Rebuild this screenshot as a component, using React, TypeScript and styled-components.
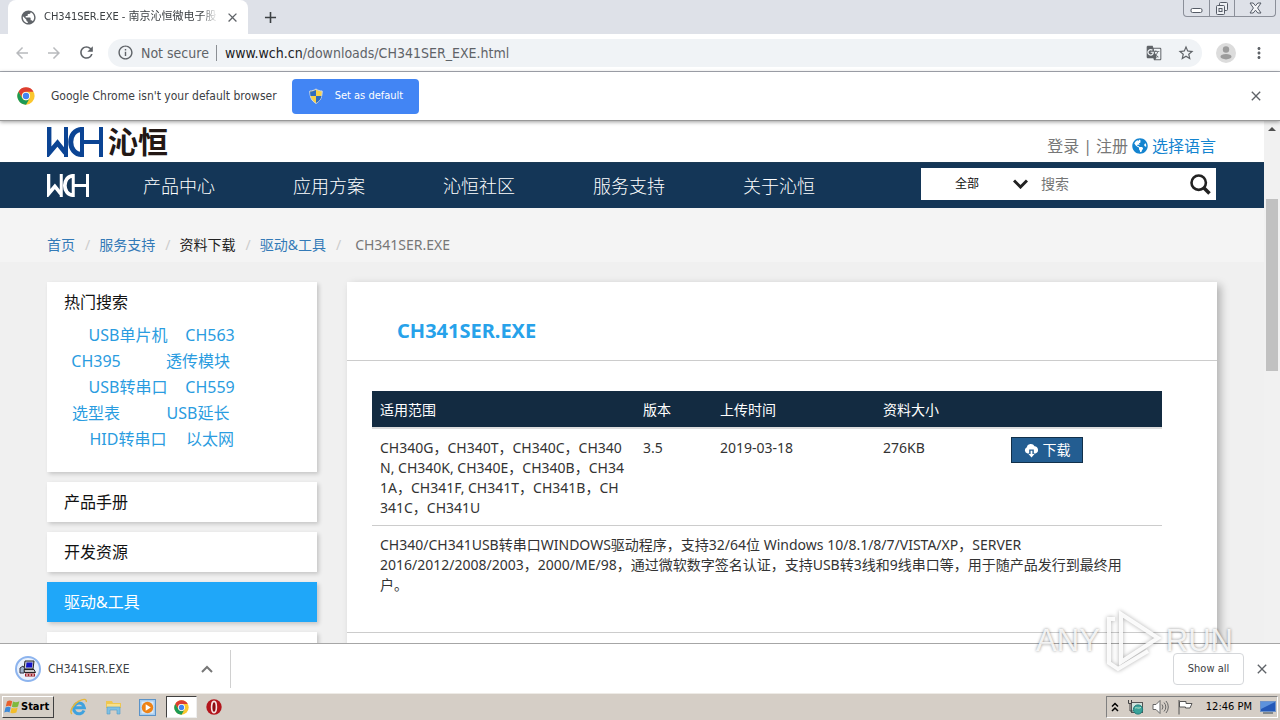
import React from "react";
import styled, { createGlobalStyle } from "styled-components";
import {
  MdAdd,
  MdArrowBack,
  MdArrowForward,
  MdClose,
  MdGTranslate,
  MdInfoOutline,
  MdMoreVert,
  MdPublic,
  MdRefresh,
  MdStarBorder,
} from "react-icons/md";
import { FaGlobeAmericas } from "react-icons/fa";

const ui = `"DejaVu Sans Condensed", "Noto Sans", "Noto Sans CJK SC", sans-serif`;
const web = `"Noto Sans", "Noto Sans CJK SC", sans-serif`;

const GlobalStyle = createGlobalStyle`
  *, *::before, *::after { box-sizing: border-box; }
  body { margin: 0; font-family: ${web}; color: #333; background: #fff; }
  button, input, select { font: inherit; color: inherit; margin: 0; padding: 0; border: 0; background: none; border-radius: 0; outline: none; }
  button { cursor: pointer; }
  a { text-decoration: none; }
  svg { display: block; flex: none; }
  ul, ol { list-style: none; margin: 0; padding: 0; }
`;

const Screen = styled.div`
  height: 100vh;
  display: flex;
  flex-direction: column;
  overflow: hidden;
`;

/* ---------- browser frame ---------- */

const TabStrip = styled.div`
  flex: none;
  height: 34px;
  background: #dee1e8;
  display: flex;
  padding-left: 8px;
`;

const Tab = styled.div`
  width: 240px;
  background: #fff;
  border-radius: 8px 8px 0 0;
  display: flex;
  align-items: center;
  padding: 0 8px 0 12px;
  gap: 7px;
  color: #5f6368;
`;

const TabTitle = styled.span`
  flex: 1;
  min-width: 0;
  overflow: hidden;
  white-space: nowrap;
  font: 11px/16px ${ui};
  color: #3c4043;
  mask-image: linear-gradient(to right, #000 90%, transparent);
`;

const IconButton = styled.button<{ $tone?: string }>`
  display: flex;
  align-items: center;
  justify-content: center;
  color: ${(p) => p.$tone || "#5f6368"};
`;

const NewTab = styled(IconButton)`
  width: 44px;
`;

const WindowButtons = styled.div`
  margin: 0 4px 0 auto;
  height: 17px;
  display: flex;
  border: 1px solid #8b8f99;
  border-top: 0;
  border-radius: 0 0 4px 4px;
`;

const WindowButton = styled.button<{ $wide?: boolean }>`
  width: ${(p) => (p.$wide ? 41 : 25)}px;
  display: flex;
  align-items: center;
  justify-content: center;
  &:not(:first-child) { border-left: 1px solid #8b8f99; }
`;

const Toolbar = styled.div`
  flex: none;
  height: 38px;
  background: #fff;
  border-bottom: 1px solid #a9adb5;
  display: flex;
  align-items: center;
  padding: 0 12px 0 13px;
  gap: 14px;
`;

const AddressBar = styled.div`
  flex: 1;
  height: 28px;
  margin-left: -2px;
  border-radius: 14px;
  background: #f0f3f6;
  display: flex;
  align-items: center;
  padding: 0 7px 0 9px;
  font: 14px/20px ${ui};
  color: #5f6368;
`;

const Security = styled.span`
  margin-left: 7px;
  padding-right: 7px;
  border-right: 1px solid #8b8f94;
  line-height: 16px;
`;

const Url = styled.span`
  flex: 1;
  margin-left: 8px;
  b { font-weight: 400; color: #202124; }
`;

const AddressIcons = styled.span`
  display: flex;
  align-items: center;
  gap: 15px;
`;

const InfoBar = styled.div`
  flex: none;
  height: 49px;
  background: #fff;
  display: flex;
  align-items: center;
  padding: 0 16px 0 17px;
  font: 12px/16px ${ui};
  color: #3c4043;
  border-bottom: 1px solid #989898;
  box-shadow: 0 1px 4px rgba(0, 0, 0, 0.4);
  position: relative;
`;

const InfoText = styled.span`
  margin: 0 15px 0 16px;
`;

const DefaultButton = styled.button`
  height: 35px;
  padding: 0 16px;
  border-radius: 4px;
  background: #4285f4;
  color: #fff;
  font-size: 11px;
  display: flex;
  align-items: center;
  gap: 11px;
`;

const PushRight = styled.span`
  margin-left: auto;
`;

/* ---------- web page ---------- */

const Viewport = styled.div`
  flex: 1;
  min-height: 0;
  display: flex;
  overflow: hidden;
`;

const Page = styled.div`
  flex: 1;
  min-width: 0;
  overflow: hidden;
  background: #f0f0f0;
`;

const Scrollbar = styled.div`
  flex: none;
  width: 16px;
  background: #f1f1f1;
  display: flex;
  flex-direction: column;
  align-items: center;
  padding-top: 5px;
`;

const Thumb = styled.div`
  width: 12px;
  height: 172px;
  margin-top: 68px;
  background: #c1c1c1;
`;

const Container = styled.div`
  max-width: 1170px;
  margin: 0 auto;
  display: flex;
`;

const TopBand = styled.header`
  background: #fff;
  ${Container} {
    height: 41px;
    align-items: center;
    justify-content: space-between;
  }
`;

const Brand = styled.a`
  display: flex;
  align-items: center;
  gap: 5px;
  color: #231815;
  font-size: 30px;
  line-height: 36px;
  font-weight: 700;
`;

const Account = styled.div`
  display: flex;
  align-items: center;
  gap: 4px;
  padding: 8px 1px 0 0;
  font-size: 16px;
  line-height: 24px;
  color: #777;
  a { color: #777; }
`;

const LanguageLink = styled.a`
  && { color: #1484d0; }
  display: flex;
  align-items: center;
  gap: 4px;
`;

const NavBand = styled.nav`
  background: #143657;
  border-top: 1px solid #1b3a55;
  ${Container} {
    height: 45px;
    align-items: center;
  }
`;

const NavList = styled.ul`
  display: flex;
  margin-left: 15px;
`;

const NavItem = styled.li`
  width: 150px;
  text-align: center;
  a { color: #fff; font-size: 18px; line-height: 24px; font-weight: 300; }
`;

const SearchBox = styled.form`
  margin: 0 1px 3px auto;
  width: 295px;
  height: 32px;
  background: #fff;
  display: flex;
  align-items: center;
  padding-right: 5px;
  svg { color: #222; }
`;

const Scope = styled.select`
  appearance: none;
  width: 92px;
  padding-left: 34px;
  font-size: 12px;
  line-height: 20px;
  color: #111;
`;

const Query = styled.input`
  flex: 1;
  min-width: 0;
  margin-left: 13px;
  font-size: 14px;
  line-height: 20px;
  &::placeholder { color: #757575; opacity: 1; }
`;

const CrumbBand = styled.div`
  background: #f4f4f4;
  ${Container} {
    height: 54px;
    padding-top: 20px;
    align-items: center;
  }
`;

const Crumbs = styled.ol`
  display: flex;
  font-size: 14px;
  line-height: 20px;
`;

const Crumb = styled.li<{ $current?: boolean }>`
  color: ${(p) => (p.$current ? "#777" : "#222")};
  a { color: #337ab7; }
  &:not(:first-child)::before {
    content: "/";
    color: #ccc;
    padding: 0 ${(p) => (p.$current ? 14 : 9)}px 0 10px;
  }
`;

const Body = styled(Container)`
  padding-top: 20px;
  gap: 30px;
  align-items: flex-start;
`;

const Sidebar = styled.aside`
  flex: none;
  width: 270px;
  display: flex;
  flex-direction: column;
  gap: 10px;
`;

const HotCard = styled.section`
  height: 190px;
  background: #fff;
  box-shadow: 2px 2px 4px rgba(0, 0, 0, 0.18);
  padding: 8px 17px;
`;

const HotTitle = styled.h2`
  margin: 0 0 7px;
  font-size: 16px;
  line-height: 25px;
  font-weight: 400;
  color: #111;
`;

const HotRow = styled.div<{ $wideFirst: boolean }>`
  display: grid;
  grid-template-columns: ${(p) => (p.$wideFirst ? "96px 64px" : "64px 96px")};
  column-gap: ${(p) => (p.$wideFirst ? 2 : 22)}px;
  padding-left: ${(p) => (p.$wideFirst ? 16 : 0)}px;
  text-align: center;
  a { color: #2a9ce0; font-size: 16px; line-height: 26px; white-space: nowrap; }
`;

const SideLink = styled.a<{ $active?: boolean }>`
  height: 40px;
  padding: 0 17px;
  font-size: 16px;
  line-height: 40px;
  color: ${(p) => (p.$active ? "#fff" : "#111")};
  background: ${(p) => (p.$active ? "#1fa7f9" : "#fff")};
  box-shadow: 2px 2px 4px rgba(0, 0, 0, 0.18);
`;

const Main = styled.main`
  flex: 1;
  min-width: 0;
  height: 480px;
  background: #fff;
  box-shadow: 4px 3px 8px rgba(0, 0, 0, 0.25);
`;

const Title = styled.h1`
  margin: 0;
  padding: 20px 50px 0;
  height: 79px;
  border-bottom: 1px solid #ccc;
  display: flex;
  align-items: center;
  font-size: 20px;
  line-height: 26px;
  font-weight: 700;
  color: #27a2ea;
`;

const Section = styled.div`
  height: 272px;
  padding: 30px 55px 0 25px;
  border-bottom: 1px solid #ccc;
`;

const Files = styled.table`
  width: 100%;
  table-layout: fixed;
  border-collapse: collapse;
  font-size: 14px;
  line-height: 20px;
  th, td { text-align: left; vertical-align: top; padding: 9px 8px 7px; font-weight: 400; }
  thead tr { background: #132b41; color: #fff; border-bottom: 2px solid #ddd; }
  tbody tr + tr { border-top: 1px solid #ccc; }
  td.action { padding-top: 8px; }
`;

const DownloadLink = styled.a`
  display: inline-flex;
  align-items: center;
  justify-content: center;
  gap: 4px;
  width: 72px;
  height: 26px;
  background: #235d91;
  border: 1px solid #12304a;
  color: #fff;
`;

const Line = styled.span`
  display: block;
  white-space: nowrap;
`;

/* ---------- download shelf and taskbar ---------- */

const Shelf = styled.div`
  flex: none;
  height: 50px;
  background: #fff;
  border-top: 1px solid #a6a6a6;
  display: flex;
  align-items: center;
  padding: 0 10px 0 15px;
  font: 11px/16px ${ui};
  color: #3c4043;
`;

const DownloadItem = styled.button`
  width: 216px;
  height: 38px;
  padding-right: 17px;
  border-right: 1px solid #d0d0d0;
  display: flex;
  align-items: center;
  gap: 7px;
  svg:last-child { margin-left: auto; }
  span { font-size: 12px; }
`;

const ShowAll = styled.button`
  margin: 0 10px 0 auto;
  width: 71px;
  height: 32px;
  border: 1px solid #d5d7da;
  border-radius: 4px;
  background: #fff;
`;

const Taskbar = styled.div`
  flex: none;
  height: 27px;
  background: #d5cec6;
  border-top: 1px solid #eeebe6;
  display: flex;
  align-items: center;
  padding: 0 2px;
  font: 11px/16px ${ui};
  color: #000;
`;

const StartButton = styled.button`
  width: 52px;
  height: 22px;
  display: flex;
  align-items: center;
  gap: 1px;
  padding-left: 1px;
  border: 1px solid;
  border-color: #fff #404040 #404040 #fff;
  font-weight: 700;
`;

const Launchers = styled.div`
  display: flex;
  align-items: center;
  margin-left: 8px;
`;

const Launcher = styled.button<{ $open?: boolean }>`
  width: ${(p) => (p.$open ? 31 : 34)}px;
  margin-left: ${(p) => (p.$open ? 2 : 0)}px;
  height: 22px;
  display: flex;
  align-items: center;
  justify-content: center;
  ${(p) => p.$open && "background: #fff; border: 1px solid; border-color: #404040 #eee #eee #404040;"}
`;

const Tray = styled.div`
  margin-left: auto;
  width: 172px;
  height: 22px;
  display: flex;
  align-items: center;
  gap: 8px;
  padding: 0 1px 0 4px;
  border: 1px solid;
  border-color: #808080 #fff #fff #808080;
  time { margin-left: auto; white-space: nowrap; }
`;

const Watermark = styled.div`
  position: absolute;
  right: 47px;
  bottom: 46px;
  height: 66px;
  display: flex;
  align-items: center;
  gap: 4px;
  font: 31px/48px "Liberation Sans", sans-serif;
  color: rgba(255, 255, 255, 0.85);
  text-shadow: 0 0 3px rgba(0, 0, 0, 0.45);
  pointer-events: none;
  svg { filter: drop-shadow(0 0 2px rgba(0, 0, 0, 0.35)); }
`;

/* ---------- drawings ---------- */

const WchMark = ({ width, height, color }: { width: number; height: number; color: string }) => (
  <svg width={width} height={height} viewBox="0 0 56 30" preserveAspectRatio="none" fill="none" stroke={color} aria-label="WCH">
    <path d="M2 0V26L10.500 16L18.500 26" strokeWidth="4.800" />
    <path d="M19 0V30M35 0V30M54 0V30M35 15H54" strokeWidth="4" />
    <path d="M35 2.500C20 2.500 20 27.500 35 27.500" strokeWidth="5" />
  </svg>
);

const ChromeMark = ({ size }: { size: number }) => (
  <svg width={size} height={size} viewBox="0 0 48 48">
    <circle cx="24" cy="24" r="23" fill="#fbc72e" />
    <path d="M4 12.500A23 23 0 0 1 44 12.500H24A11.500 11.500 0 0 0 14 29.800Z" fill="#dd3d31" />
    <path d="M4 12.500L14 29.800A11.500 11.500 0 0 0 34 29.800L24 47A23 23 0 0 1 4 12.500Z" fill="#1c9a55" />
    <circle cx="24" cy="24" r="11" fill="#fff" />
    <circle cx="24" cy="24" r="8.500" fill="#4384f0" />
  </svg>
);

const Shield = () => (
  <svg width="16" height="16" viewBox="0 0 16 16">
    <path d="M8 1C6 2.400 4 3 1.800 3C1.800 9 3.500 13 8 15.400C12.500 13 14.200 9 14.200 3C12 3 10 2.400 8 1Z" fill="#f7d24a" stroke="#cfd8e6" />
    <path d="M8 2V8H2.500C2.200 6.500 2.100 5 2.200 3.500C4.500 3.500 6.500 2.900 8 2Z" fill="#2f6cc0" />
    <path d="M8 8H13.500C12.800 11.300 11 13.500 8 15Z" fill="#2f6cc0" />
  </svg>
);

const Avatar = () => (
  <svg width="20" height="20" viewBox="0 0 20 20">
    <circle cx="10" cy="10" r="10" fill="#dcdcdc" />
    <circle cx="10" cy="6.500" r="3.200" fill="#9c9c9c" />
    <ellipse cx="10" cy="13.700" rx="5.500" ry="2.700" fill="#9c9c9c" />
  </svg>
);

const Minimize = () => (
  <svg width="13" height="15" viewBox="0 0 13 15" fill="#fff" stroke="#555b66">
    <rect x="1" y="7.500" width="11" height="4" rx="1.500" />
  </svg>
);

const Restore = () => (
  <svg width="14" height="15" viewBox="0 0 14 15" fill="#eef0f4" stroke="#555b66">
    <rect x="4.500" y="1.500" width="8" height="8" rx="1" />
    <rect x="1.500" y="4.500" width="8" height="9" rx="1" />
    <rect x="4" y="7.500" width="3" height="3" />
  </svg>
);

const CloseWindow = () => (
  <svg width="13" height="12" viewBox="0 0 13 12" fill="#f4f5f8" stroke="#555b66">
    <path d="M1 1H4.200L6.500 3.800L8.800 1H12L8.600 6L12 11H8.800L6.500 8.200L4.200 11H1L4.400 6Z" />
  </svg>
);

const ChevronDown = () => (
  <svg width="15" height="10" viewBox="0 0 15 10" fill="none" stroke="currentColor" strokeWidth="3">
    <path d="M1 1.500L7.500 8L14 1.500" />
  </svg>
);

const Magnifier = () => (
  <svg width="21" height="21" viewBox="0 0 21 21" fill="none" stroke="currentColor">
    <circle cx="8.700" cy="8.700" r="7.200" strokeWidth="2.600" />
    <path d="M14 14L19.500 19.500" strokeWidth="3.600" />
  </svg>
);

const CloudDownload = () => (
  <svg width="15" height="15" viewBox="0 0 15 15" fill="#fff">
    <path d="M3.500 10.500A3.200 3.200 0 0 1 2.600 4.500A4.300 4.300 0 0 1 10.600 3.300A3.700 3.700 0 0 1 11.500 10.500H9.800V6.500H5.200V10.500Z" />
    <path d="M6.600 7.800H8.400V11H10.500L7.500 14.600L4.500 11H6.600Z" />
  </svg>
);

const InstallerIcon = () => (
  <svg width="26" height="26" viewBox="0 0 26 26">
    <circle cx="13" cy="13" r="12" fill="#e9f1fc" stroke="#8db4ee" strokeWidth="2" />
    <path d="M10 5H19L18 13H9Z" fill="#c8ccd4" stroke="#222" />
    <path d="M11.500 6.500H17.500L17 11.500H11Z" fill="#1414c8" />
    <path d="M5 12L8 10L10 13L9 17H5Z" fill="#9fb4cc" stroke="#334" />
    <path d="M9 13.500H19L20.500 16.500H9.500Z" fill="#c9c9c9" stroke="#222" />
    <path d="M10 17.500H20V20.500H10Z" fill="#9c1c24" />
    <path d="M12 18V20M15 18V20M18 18V20" stroke="#fff" />
  </svg>
);

const ChevronUp = () => (
  <svg width="12" height="8" viewBox="0 0 12 8" fill="none" stroke="#777" strokeWidth="2">
    <path d="M1 7L6 2L11 7" />
  </svg>
);

const WindowsFlag = () => (
  <svg width="16" height="16" viewBox="0 0 16 16">
    <path d="M3 2.500C5 1.200 6.500 1.400 8.200 2.300L7 7.400C5.400 6.500 3.800 6.400 1.800 7.600Z" fill="#e8602c" />
    <path d="M9 2.600C11 3.500 13 3.500 15.400 2.200L14 7.400C12 8.500 10 8.500 7.900 7.700Z" fill="#7fb93c" />
    <path d="M1.500 8.600C3.500 7.500 5 7.500 6.700 8.400L5.500 13.500C3.900 12.600 2.300 12.500 0.300 13.600Z" fill="#3d8ad8" />
    <path d="M7.600 8.800C9.600 9.600 11.400 9.600 13.700 8.500L12.400 13.500C10.300 14.500 8.300 14.500 6.400 13.700Z" fill="#f3bd2b" />
  </svg>
);

const ExplorerE = () => (
  <svg width="18" height="18" viewBox="0 0 18 18" fill="none">
    <path d="M14 12.500A5.400 5.400 0 1 1 14.400 9.800H5" stroke="#3fa2de" strokeWidth="3" />
    <path d="M2 16C-1 14 3 6 9 3C13 0.800 17 0.500 16.200 4" stroke="#e5b63a" strokeWidth="1.400" />
  </svg>
);

const FolderIcon = () => (
  <svg width="17" height="16" viewBox="0 0 17 16">
    <path d="M1 2H7L8 4H16V9H1Z" fill="#efc750" />
    <rect x="2" y="5" width="13" height="6" fill="#f8e08a" />
    <path d="M2 8H15V15H12V11H5V15H2Z" fill="#7fc0e4" stroke="#539cc6" strokeWidth="0.600" />
  </svg>
);

const MediaIcon = () => (
  <svg width="17" height="17" viewBox="0 0 17 17">
    <rect x="0.500" y="0.500" width="16" height="16" fill="#a9cdee" stroke="#5b93c8" />
    <rect x="2.500" y="2.500" width="12" height="12" fill="#dbeaf8" />
    <circle cx="8.500" cy="8.500" r="5.700" fill="#ee8316" />
    <path d="M6.700 5.300L11.800 8.500L6.700 11.700Z" fill="#fff" />
  </svg>
);

const OperaIcon = () => (
  <svg width="16" height="16" viewBox="0 0 16 16">
    <circle cx="8" cy="8" r="7.700" fill="#b3151c" />
    <ellipse cx="8" cy="8" rx="2.400" ry="5.600" fill="#8d0c12" stroke="#f6e4e4" strokeWidth="1.600" />
  </svg>
);

const TrayArrows = () => (
  <svg width="8" height="10" viewBox="0 0 8 10" fill="none" stroke="#000" strokeWidth="1.500">
    <path d="M1 4.500L4 1.500L7 4.500M1 9L4 6L7 9" />
  </svg>
);

const NetworkIcon = () => (
  <svg width="17" height="16" viewBox="0 0 17 16">
    <rect x="4.500" y="3.500" width="11" height="10" fill="#cfe3dc" stroke="#555" />
    <path d="M1.500 1V4.500H4.500V1M3 4.500V12H6" fill="none" stroke="#444" />
    <circle cx="11" cy="10.500" r="4.600" fill="#3aa39a" stroke="#1d7a78" />
    <path d="M8 9C10 8 11 10 14 8.500" stroke="#bfe6c9" fill="none" />
  </svg>
);

const SpeakerIcon = () => (
  <svg width="17" height="16" viewBox="0 0 17 16" fill="none" stroke="#666">
    <path d="M1 5.500H4L8 1.500V14.500L4 10.500H1Z" fill="#fff" />
    <path d="M10 5.500A4 4 0 0 1 10 10.500M12 3.500A6.500 6.500 0 0 1 12 12.500M14 2A9 9 0 0 1 14 14" />
  </svg>
);

const FlagIcon = () => (
  <svg width="16" height="16" viewBox="0 0 16 16" fill="#fff" stroke="#555">
    <path d="M2 1V15.500" />
    <path d="M2.500 2.500H9V4.500H15L13 9H8.500V8H2.500Z" />
  </svg>
);

const DesktopIcon = () => (
  <svg width="16" height="14" viewBox="0 0 16 14">
    <rect x="0.500" y="1.500" width="15" height="10" fill="#2559b8" stroke="#6f93c9" />
    <path d="M1 2H15L1 9Z" fill="#5d92dc" />
    <path d="M3 13H13" stroke="#345" />
  </svg>
);

const PlayMark = () => (
  <svg width="58" height="64" viewBox="0 0 58 64" fill="none" stroke="rgba(255,255,255,0.9)" strokeWidth="4">
    <path d="M17 5L54 29L17 53Z" />
    <path d="M11 10H5V54L14 60L44 42" />
  </svg>
);

/* ---------- data ---------- */

const navItems = ["产品中心", "应用方案", "沁恒社区", "服务支持", "关于沁恒"];

const hotWords = [
  ["USB单片机", "CH563"],
  ["CH395", "透传模块"],
  ["USB转串口", "CH559"],
  ["选型表", "USB延长"],
  ["HID转串口", "以太网"],
];

const chipLines = [
  "CH340G，CH340T，CH340C，CH340",
  "N, CH340K, CH340E，CH340B，CH34",
  "1A，CH341F, CH341T，CH341B，CH",
  "341C，CH341U",
];

const notes = [
  "CH340/CH341USB转串口WINDOWS驱动程序，支持32/64位 Windows 10/8.1/8/7/VISTA/XP，SERVER",
  "2016/2012/2008/2003，2000/ME/98，通过微软数字签名认证，支持USB转3线和9线串口等，用于随产品发行到最终用",
  "户。",
];

export default function App() {
  return (
    <Screen>
      <GlobalStyle />
      <TabStrip>
        <Tab>
          <MdPublic size={17} />
          <TabTitle>CH341SER.EXE - 南京沁恒微电子股</TabTitle>
          <IconButton aria-label="Close tab"><MdClose size={15} /></IconButton>
        </Tab>
        <NewTab aria-label="New tab" $tone="#3c4043"><MdAdd size={19} /></NewTab>
        <WindowButtons>
          <WindowButton aria-label="Minimize"><Minimize /></WindowButton>
          <WindowButton aria-label="Restore"><Restore /></WindowButton>
          <WindowButton aria-label="Close" $wide><CloseWindow /></WindowButton>
        </WindowButtons>
      </TabStrip>

      <Toolbar>
        <IconButton aria-label="Back" $tone="#b8babd"><MdArrowBack size={18} /></IconButton>
        <IconButton aria-label="Forward" $tone="#b8babd"><MdArrowForward size={18} /></IconButton>
        <IconButton aria-label="Reload"><MdRefresh size={19} /></IconButton>
        <AddressBar>
          <MdInfoOutline size={17} />
          <Security>Not secure</Security>
          <Url><b>www.wch.cn</b>/downloads/CH341SER_EXE.html</Url>
          <AddressIcons>
            <IconButton aria-label="Translate"><MdGTranslate size={16} /></IconButton>
            <IconButton aria-label="Bookmark"><MdStarBorder size={18} /></IconButton>
          </AddressIcons>
        </AddressBar>
        <IconButton aria-label="Profile"><Avatar /></IconButton>
        <IconButton aria-label="Menu"><MdMoreVert size={18} /></IconButton>
      </Toolbar>

      <InfoBar>
        <ChromeMark size={18} />
        <InfoText>Google Chrome isn't your default browser</InfoText>
        <DefaultButton><Shield />Set as default</DefaultButton>
        <PushRight>
          <IconButton aria-label="Dismiss"><MdClose size={16} /></IconButton>
        </PushRight>
      </InfoBar>

      <Viewport>
        <Page>
          <TopBand>
            <Container>
              <Brand href="#"><WchMark width={56} height={30} color="#0b4494" />沁恒</Brand>
              <Account>
                <a href="#">登录</a>|<a href="#">注册</a>
                <LanguageLink href="#"><FaGlobeAmericas size={16} />选择语言</LanguageLink>
              </Account>
            </Container>
          </TopBand>
          <NavBand>
            <Container>
              <a href="#"><WchMark width={42} height={23} color="#fff" /></a>
              <NavList>
                {navItems.map((n) => (
                  <NavItem key={n}><a href="#">{n}</a></NavItem>
                ))}
              </NavList>
              <SearchBox>
                <Scope aria-label="搜索范围"><option>全部</option></Scope>
                <ChevronDown />
                <Query aria-label="搜索" placeholder="搜索" />
                <IconButton type="button" aria-label="搜索"><Magnifier /></IconButton>
              </SearchBox>
            </Container>
          </NavBand>
          <CrumbBand>
            <Container>
              <Crumbs>
                <Crumb><a href="#">首页</a></Crumb>
                <Crumb><a href="#">服务支持</a></Crumb>
                <Crumb>资料下载</Crumb>
                <Crumb><a href="#">驱动&amp;工具</a></Crumb>
                <Crumb $current>CH341SER.EXE</Crumb>
              </Crumbs>
            </Container>
          </CrumbBand>
          <Body>
            <Sidebar>
              <HotCard>
                <HotTitle>热门搜索</HotTitle>
                {hotWords.map((row, i) => (
                  <HotRow key={row[0]} $wideFirst={i % 2 === 0}>
                    {row.map((w) => <a href="#" key={w}>{w}</a>)}
                  </HotRow>
                ))}
              </HotCard>
              <SideLink href="#">产品手册</SideLink>
              <SideLink href="#">开发资源</SideLink>
              <SideLink href="#" $active>驱动&amp;工具</SideLink>
              <SideLink href="#" aria-label="更多" />
            </Sidebar>
            <Main>
              <Title>CH341SER.EXE</Title>
              <Section>
                <Files>
                  <colgroup>
                    <col style={{ width: "263px" }} />
                    <col style={{ width: "77px" }} />
                    <col style={{ width: "163px" }} />
                    <col style={{ width: "128px" }} />
                    <col />
                  </colgroup>
                  <thead>
                    <tr><th>适用范围</th><th>版本</th><th>上传时间</th><th>资料大小</th><th /></tr>
                  </thead>
                  <tbody>
                    <tr>
                      <td>{chipLines.map((l) => <Line key={l}>{l}</Line>)}</td>
                      <td>3.5</td>
                      <td>2019-03-18</td>
                      <td>276KB</td>
                      <td className="action"><DownloadLink href="#"><CloudDownload />下载</DownloadLink></td>
                    </tr>
                    <tr>
                      <td colSpan={5}>{notes.map((l) => <Line key={l}>{l}</Line>)}</td>
                    </tr>
                  </tbody>
                </Files>
              </Section>
            </Main>
          </Body>
        </Page>
        <Scrollbar>
          <svg width="8" height="5" viewBox="0 0 8 5"><path d="M0 5L4 1L8 5Z" fill="#505050" /></svg>
          <Thumb />
        </Scrollbar>
      </Viewport>

      <Shelf>
        <DownloadItem>
          <InstallerIcon />
          <span>CH341SER.EXE</span>
          <ChevronUp />
        </DownloadItem>
        <ShowAll>Show all</ShowAll>
        <IconButton aria-label="Close downloads"><MdClose size={16} /></IconButton>
      </Shelf>

      <Taskbar>
        <StartButton><WindowsFlag />Start</StartButton>
        <Launchers>
          <Launcher aria-label="Internet Explorer"><ExplorerE /></Launcher>
          <Launcher aria-label="Explorer"><FolderIcon /></Launcher>
          <Launcher aria-label="Media Player"><MediaIcon /></Launcher>
          <Launcher aria-label="Chrome" $open><ChromeMark size={15} /></Launcher>
          <Launcher aria-label="Opera"><OperaIcon /></Launcher>
        </Launchers>
        <Tray>
          <TrayArrows />
          <NetworkIcon />
          <SpeakerIcon />
          <FlagIcon />
          <time>12:46 PM</time>
          <DesktopIcon />
        </Tray>
      </Taskbar>

      <Watermark><span>ANY</span><PlayMark /><span>RUN</span></Watermark>
    </Screen>
  );
}
